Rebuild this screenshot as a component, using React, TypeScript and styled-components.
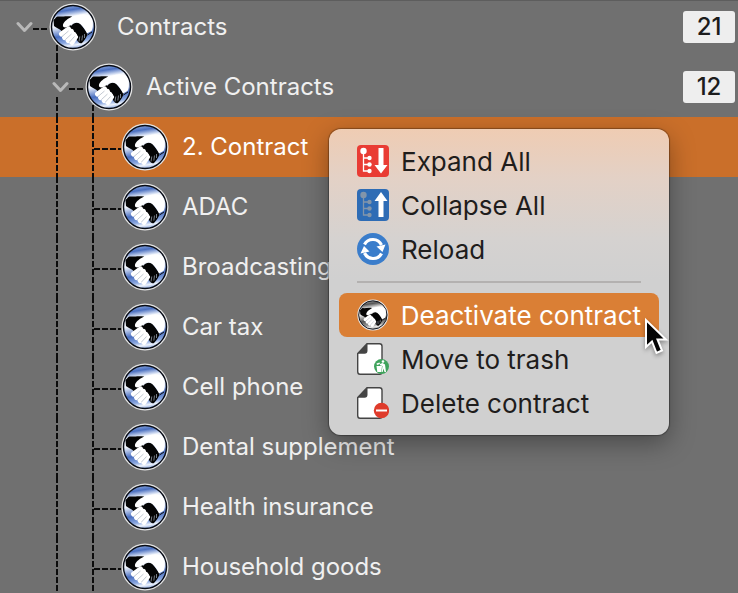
import React from 'react';
import styled, { createGlobalStyle } from 'styled-components';

const GlobalStyle = createGlobalStyle`
  * { box-sizing: border-box; }
  html, body, #root { height: 100%; }
  body {
    margin: 0;
    overflow: hidden;
    background: #707070;
    font-family: Inter, "Liberation Sans", sans-serif;
    font-size: 24px;
    line-height: 30px;
  }
`;

const Screen = styled.main`
  position: relative;
  height: 100%;
  overflow: hidden;
  border-top: 1px solid #5d5d5d;
`;

const Tree = styled.ul`
  list-style: none;
  margin: -4px 0 0;
  padding: 0;
`;

const dash = 'repeating-linear-gradient(#0c0c0c 0 6px, transparent 6px 8px)';

const guides = {
  root: `background: ${dash} 56px 48px / 2px 100% no-repeat;`,
  branch: `background: ${dash} 56px 0 / 2px 22px no-repeat, ${dash} 56px 40px / 2px 20px no-repeat, ${dash} 92px 48px / 2px 12px no-repeat;`,
  leaf: `background: ${dash} 56px 0 / 2px 60px no-repeat, ${dash} 92px 0 / 2px 60px no-repeat;`,
};

const indent = { root: 16, branch: 52, leaf: 94 };

type Level = 'root' | 'branch' | 'leaf';

const Row = styled.li<{ $level: Level; $selected?: boolean }>`
  display: flex;
  align-items: center;
  height: 60px;
  padding: 0 3px 0 ${(p) => indent[p.$level]}px;
  color: ${(p) => (p.$selected ? '#fff' : '#f0f0f0')};
  ${(p) => guides[p.$level]}
  background-color: ${(p) => (p.$selected ? '#ca6f2a' : 'transparent')};
`;

const Toggle = styled.button`
  display: flex;
  width: 17px;
  padding: 0;
  border: 0;
  background: none;
  color: #b9b9b9;
`;

const Connector = styled.span<{ $long?: boolean }>`
  width: ${(p) => (p.$long ? 27 : 16)}px;
  height: 2px;
  margin-top: 4px;
  background: repeating-linear-gradient(90deg, #0c0c0c 0 6px, transparent 6px 8px);
`;

const Label = styled.span<{ $wide?: boolean }>`
  flex: 1;
  margin-left: ${(p) => (p.$wide ? 20 : 13)}px;
  white-space: nowrap;
`;

const Count = styled.span`
  width: 52px;
  border-radius: 3px;
  background: #eee;
  color: #1c1c1c;
  font-weight: 500;
  line-height: 32px;
  text-align: center;
`;

const Menu = styled.div`
  position: absolute;
  top: 128px;
  left: 329px;
  width: 340px;
  padding: 10px;
  border-radius: 12px;
  background: linear-gradient(#efccb3 0, #e3d1c6 50px, #d5d2d0 110px, #d0d0d0 150px);
  box-shadow: 0 0 1px 1px rgba(0, 0, 0, 0.3), 0 8px 26px rgba(0, 0, 0, 0.35);
`;

const MenuItem = styled.button<{ $active?: boolean }>`
  display: flex;
  align-items: center;
  gap: 12px;
  width: 100%;
  height: 44px;
  padding: 0 18px;
  border: 0;
  border-radius: 8px;
  background: ${(p) => (p.$active ? '#da7f35' : 'transparent')};
  color: ${(p) => (p.$active ? '#fff' : '#1f1d1c')};
  font: inherit;
  font-size: 26px;
  line-height: 32px;
  text-align: left;
  white-space: nowrap;
`;

const MenuText = styled.span`
  padding-top: 2px;
`;

const Divider = styled.hr`
  height: 2px;
  margin: 10px 18px;
  border: 0;
  background: #b3b1b0;
`;

const Pointer = styled.svg`
  position: absolute;
  top: 315px;
  left: 643px;
  filter: drop-shadow(0 2px 2px rgba(0, 0, 0, 0.35));
`;

function Chevron() {
  return (
    <svg width="17" height="12" viewBox="0 0 17 12" fill="none" stroke="currentColor" strokeWidth="3" strokeLinecap="round" strokeLinejoin="round" aria-hidden="true">
      <path d="M2 2.5 8.5 9.5 15 2.5" />
    </svg>
  );
}

function Handshake({ size = 48, mono = false }: { size?: number; mono?: boolean }) {
  const id = React.useId();
  const deep = mono ? '#555' : '#4a6fc0';
  const mid = mono ? '#999' : '#8ba8e0';
  const pale = mono ? '#e8e8e8' : '#eef3fc';
  return (
    <svg width={size} height={size} viewBox="0 0 48 48" aria-hidden="true">
      <defs>
        <linearGradient id={id} x1="0.38" y1="0" x2="0.54" y2="1">
          <stop offset="0" stopColor={mid} />
          <stop offset="0.11" stopColor={deep} />
          <stop offset="0.25" stopColor={pale} />
          <stop offset="0.45" stopColor={pale} />
          <stop offset="0.68" stopColor={deep} />
          <stop offset="0.84" stopColor={mid} />
          <stop offset="0.92" stopColor={pale} />
          <stop offset="1" stopColor={mid} />
        </linearGradient>
      </defs>
      <circle cx="24" cy="24" r="23.5" fill="#e4e4e4" />
      <circle cx="24" cy="24" r="21.500" fill={`url(#${id})`} stroke="#080c16" strokeWidth="1.400" />
      <path d="M4.500 17 C6 15.500 7 14 8.500 13.500 C13 14 17 12.500 23 13.500 L20 20 L22 23 C26 18.500 30 19 33 23 L38.500 30 C38.500 33 36 37 33 40 C31 41 29 39 28 37 L20 26 L13 28.500 C11 26 7 25 5 23 Z" fill="#050505" />
      <path d="M19.500 15.500 C23 13 28 12 33 11.500 C37 11 40 12 41.500 13.500 C44.500 18 44.500 25 42.500 28 L38 30.500 C36 27 34.500 23 31 20.500 C28 18.500 24.500 19 22 21.500 C19 24.500 14.500 25.500 14 23 C13.500 20.500 16.500 17.500 19.500 15.500 Z" fill="#fff" />
      <path d="M13 29 20 24.500 28 31.500 24 39 19 38Z" fill="#fff" />
      <g stroke="#fff" strokeWidth="5" strokeLinecap="round">
        <path d="m12.500 31 7-5" />
        <path d="m15.500 34.500 7-6" />
        <path d="m19 37.500 6-6" />
        <path d="m23 39.500 3.500-5.500" />
      </g>
      <g stroke="#a9b1bf" strokeWidth="0.700" fill="none">
        <path d="m13 33.500 6.500-5.500M16.500 36.500l6-5.500M20.500 39l5-5.500" />
        <path d="m30 38.500.8-5M32.800 37.500l.7-5M35.500 35v-4" />
      </g>
      <path d="m38.500 32 4.500-3" stroke="#111" strokeWidth="1" />
    </svg>
  );
}

function TreeArrowIcon({ up = false }: { up?: boolean }) {
  const nodes = up ? '#8295aa' : '#fff';
  return (
    <svg width="32" height="32" viewBox="0 0 32 32" aria-hidden="true">
      <rect width="32" height="32" rx="4" fill={up ? '#2e6cb5' : '#e93c34'} />
      <g fill={nodes} stroke="none">
        <circle cx="6.500" cy="6" r="3.200" />
        <circle cx="12.500" cy="13" r="2.200" />
        <circle cx="12.500" cy="19.500" r="2.200" />
        <circle cx="12.500" cy="26" r="2.200" />
      </g>
      <path d="M6.500 7V26H12M6.500 13H12M6.500 19.500H12" fill="none" stroke={nodes} strokeWidth="1.300" />
      <path d={up ? 'M24 3 30.500 12H26.500V28H21.500V12H17.500Z' : 'M24 28.500 30.500 20H26.500V3H21.500V20H17.500Z'} fill="#fff" />
    </svg>
  );
}

function ReloadIcon() {
  return (
    <svg width="32" height="32" viewBox="0 0 32 32" aria-hidden="true">
      <circle cx="16" cy="16" r="16" fill="#3a7dcb" />
      <g fill="none" stroke="#fff" strokeWidth="3.200">
        <path d="M7.500 11.500A9.500 9.500 0 0 1 24.500 12" />
        <path d="M24.500 20.500A9.500 9.500 0 0 1 7.500 20" />
      </g>
      <path d="M19.500 13.500 28.500 11.500 25.500 19ZM12.500 18.500 3.500 20.500 7 13Z" fill="#fff" />
    </svg>
  );
}

function PageIcon({ children }: { children: React.ReactNode }) {
  return (
    <svg width="32" height="32" viewBox="0 0 32 32" aria-hidden="true">
      <path d="M10 .7H22.500Q25 .7 25 3.200V28.500Q25 31.300 22.500 31.300H3Q.7 31.300.7 28.500V10.500Z" fill="#fff" stroke="#444" strokeWidth="1.400" />
      <path d="M10.500.5V7.500Q10.500 10.800 7.500 10.800H.5Z" fill="#444" />
      {children}
    </svg>
  );
}

function TrashBadge() {
  return (
    <g>
      <circle cx="24.500" cy="23.500" r="7.500" fill="#3fa35c" />
      <path d="M19.500 23h5.500l-.7 6h-4ZM19.500 20.500l3-1 .5 1.500-3 1Z" fill="#fff" />
      <circle cx="26" cy="18.500" r="1.300" fill="#fff" />
      <path d="M25.500 20 28 21.500 29 29H27.500L26.500 25.500 25.700 29H24.700L25.500 23 23 22.300V21Z" fill="#fff" />
    </g>
  );
}

function DeleteBadge() {
  return (
    <g>
      <circle cx="24.500" cy="23.500" r="7.700" fill="#df3b2b" />
      <path d="M19 23.500H30" stroke="#fff" strokeWidth="2" />
    </g>
  );
}

const contracts = [
  '2. Contract',
  'ADAC',
  'Broadcasting',
  'Car tax',
  'Cell phone',
  'Dental supplement',
  'Health insurance',
  'Household goods',
];

export default function App() {
  return (
    <Screen>
      <GlobalStyle />
      <Tree>
        <Row $level="root">
          <Toggle aria-label="Collapse Contracts"><Chevron /></Toggle>
          <Connector />
          <Handshake />
          <Label $wide>Contracts</Label>
          <Count>21</Count>
        </Row>
        <Row $level="branch">
          <Toggle aria-label="Collapse Active Contracts"><Chevron /></Toggle>
          <Connector />
          <Handshake />
          <Label>Active Contracts</Label>
          <Count>12</Count>
        </Row>
        {contracts.map((name, i) => (
          <Row key={name} $level="leaf" $selected={i === 0}>
            <Connector $long />
            <Handshake />
            <Label>{name}</Label>
          </Row>
        ))}
      </Tree>
      <Menu role="menu">
        <MenuItem role="menuitem"><TreeArrowIcon /><MenuText>Expand All</MenuText></MenuItem>
        <MenuItem role="menuitem"><TreeArrowIcon up /><MenuText>Collapse All</MenuText></MenuItem>
        <MenuItem role="menuitem"><ReloadIcon /><MenuText>Reload</MenuText></MenuItem>
        <Divider />
        <MenuItem role="menuitem" $active><Handshake size={32} mono /><MenuText>Deactivate contract</MenuText></MenuItem>
        <MenuItem role="menuitem"><PageIcon><TrashBadge /></PageIcon><MenuText>Move to trash</MenuText></MenuItem>
        <MenuItem role="menuitem"><PageIcon><DeleteBadge /></PageIcon><MenuText>Delete contract</MenuText></MenuItem>
      </Menu>
      <Pointer width="26" height="40" viewBox="0 0 26 40" aria-hidden="true">
        <path d="M3 4V31L9 25.500 13.500 37 19 34.500 14.500 23.500H23Z" fill="#050505" stroke="#fff" strokeWidth="2" />
      </Pointer>
    </Screen>
  );
}
